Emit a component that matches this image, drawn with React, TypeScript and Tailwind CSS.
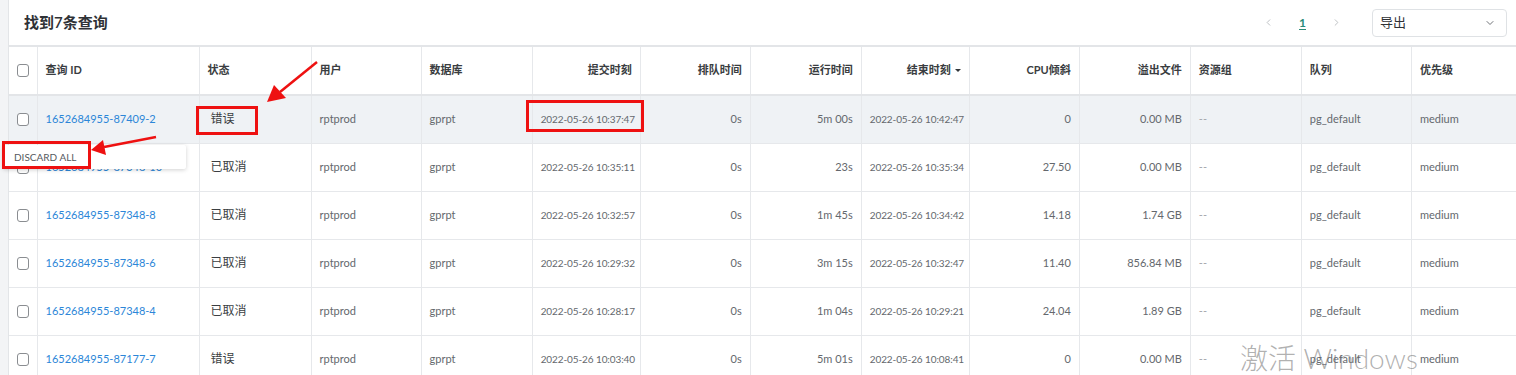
import { ChevronDown, ChevronLeft, ChevronRight } from 'lucide-react';

interface QueryRow {
  id: string;
  status: string;
  user: string;
  db: string;
  submitted: string;
  queued: string;
  runtime: string;
  ended: string;
  cpuSkew: string;
  spill: string;
  group: string;
  queue: string;
  priority: string;
}

const rows: QueryRow[] = [
  { id: '1652684955-87409-2', status: '错误', user: 'rptprod', db: 'gprpt', submitted: '2022-05-26 10:37:47', queued: '0s', runtime: '5m 00s', ended: '2022-05-26 10:42:47', cpuSkew: '0', spill: '0.00 MB', group: '--', queue: 'pg_default', priority: 'medium' },
  { id: '1652684955-87348-10', status: '已取消', user: 'rptprod', db: 'gprpt', submitted: '2022-05-26 10:35:11', queued: '0s', runtime: '23s', ended: '2022-05-26 10:35:34', cpuSkew: '27.50', spill: '0.00 MB', group: '--', queue: 'pg_default', priority: 'medium' },
  { id: '1652684955-87348-8', status: '已取消', user: 'rptprod', db: 'gprpt', submitted: '2022-05-26 10:32:57', queued: '0s', runtime: '1m 45s', ended: '2022-05-26 10:34:42', cpuSkew: '14.18', spill: '1.74 GB', group: '--', queue: 'pg_default', priority: 'medium' },
  { id: '1652684955-87348-6', status: '已取消', user: 'rptprod', db: 'gprpt', submitted: '2022-05-26 10:29:32', queued: '0s', runtime: '3m 15s', ended: '2022-05-26 10:32:47', cpuSkew: '11.40', spill: '856.84 MB', group: '--', queue: 'pg_default', priority: 'medium' },
  { id: '1652684955-87348-4', status: '已取消', user: 'rptprod', db: 'gprpt', submitted: '2022-05-26 10:28:17', queued: '0s', runtime: '1m 04s', ended: '2022-05-26 10:29:21', cpuSkew: '24.04', spill: '1.89 GB', group: '--', queue: 'pg_default', priority: 'medium' },
  { id: '1652684955-87177-7', status: '错误', user: 'rptprod', db: 'gprpt', submitted: '2022-05-26 10:03:40', queued: '0s', runtime: '5m 01s', ended: '2022-05-26 10:08:41', cpuSkew: '0', spill: '0.00 MB', group: '--', queue: 'pg_default', priority: 'medium' },
];

const columns: { label: string; width: string; right?: boolean; sort?: boolean }[] = [
  { label: '查询 ID', width: 'w-[162px]' },
  { label: '状态', width: 'w-[112px]' },
  { label: '用户', width: 'w-[110px]' },
  { label: '数据库', width: 'w-[111px]' },
  { label: '提交时刻', width: 'w-[108px]', right: true },
  { label: '排队时间', width: 'w-[110px]', right: true },
  { label: '运行时间', width: 'w-[111px]', right: true },
  { label: '结束时刻', width: 'w-[108px]', right: true, sort: true },
  { label: 'CPU倾斜', width: 'w-[110px]', right: true },
  { label: '溢出文件', width: 'w-[111px]', right: true },
  { label: '资源组', width: 'w-[111px]' },
  { label: '队列', width: 'w-[110px]' },
  { label: '优先级', width: 'w-[105px]' },
];

function Checkbox() {
  return <div className="mx-auto h-[13px] w-[12px] rounded-[3px] border border-[#8a8d91] bg-white" />;
}

const base = 'border-r border-[#e6e8eb] whitespace-nowrap overflow-hidden';
const cell = `${base} px-2 text-[11px] text-[#64686d]`;
const right = `${cell} text-right`;
const date = `${base} px-2 text-right text-[10px] tracking-[-0.1px] text-[#64686d]`;

export default function App() {
  return (
    <div
      className="relative flex h-[375px] w-[1516px] overflow-hidden bg-[#f3f4f6]"
      style={{ fontFamily: 'Lato, "Noto Sans CJK SC", sans-serif' }}
    >
      <div className="ml-[8px] flex-1 border-l border-[#e3e5e8] bg-white">
        {/* Header */}
        <div className="flex h-[45px] items-center pl-[15px] pr-[10px]">
          <h2 className="text-[15px] font-semibold text-[#2f3236]">找到7条查询</h2>
          <div className="ml-auto flex items-center">
            <ChevronLeft size={11} className="text-[#b9bcc0]" />
            <span className="ml-[25px] text-[12px] font-bold text-[#2b8a78] underline underline-offset-2">1</span>
            <ChevronRight size={11} className="ml-[25px] text-[#b9bcc0]" />
            <div className="ml-[30px] flex h-[28px] w-[135px] items-center justify-between rounded-[4px] border border-[#dfe2e5] pl-[7px] pr-[10px]">
              <span className="text-[13px] text-[#2f3236]">导出</span>
              <ChevronDown size={12} className="text-[#707378]" />
            </div>
          </div>
        </div>

        <table className="w-[1508px] table-fixed border-collapse">
          <colgroup>
            <col className="w-[28px]" />
            {columns.map((c) => (
              <col key={c.label} className={c.width} />
            ))}
          </colgroup>
          <thead>
            <tr className="h-[49px] border-y-2 border-[#e3e5e8]">
              <th className="border-r border-[#e6e8eb]">
                <Checkbox />
              </th>
              {columns.map((c) => (
                <th
                  key={c.label}
                  className={`border-r border-[#e6e8eb] px-2 text-[11px] font-bold text-[#3a3d41] ${c.right ? 'text-right' : 'text-left'}`}
                >
                  {c.label}
                  {c.sort && <span className="relative -top-px ml-1 inline-block border-x-[3px] border-t-[3px] border-x-transparent border-t-[#33363a] align-middle" />}
                </th>
              ))}
            </tr>
          </thead>
          <tbody>
            {rows.map((r, i) => (
              <tr key={r.id} className={`h-[48px] border-b border-[#e6e8eb] ${i === 0 ? 'bg-[#eff2f5]' : 'bg-white'}`}>
                <td className="border-r border-[#e6e8eb]">
                  <Checkbox />
                </td>
                <td className={`${base} px-2 text-[11px] text-[#2c86d8]`}>{r.id}</td>
                <td className={`${base} pl-[11px] pr-2 text-[12px] text-[#3b3e42]`}>{r.status}</td>
                <td className={cell}>{r.user}</td>
                <td className={cell}>{r.db}</td>
                <td className={date}>{r.submitted}</td>
                <td className={right}>{r.queued}</td>
                <td className={right}>{r.runtime}</td>
                <td className={date}>{r.ended}</td>
                <td className={right}>{r.cpuSkew}</td>
                <td className={right}>{r.spill}</td>
                <td className={`${base} px-2 text-[11px] text-[#a3a6aa]`}>{r.group}</td>
                <td className={cell}>{r.queue}</td>
                <td className={`${cell} border-r-0`}>{r.priority}</td>
              </tr>
            ))}
          </tbody>
        </table>
      </div>

      {/* Context menu */}
      <div className="absolute left-[3px] top-[145px] flex h-[24px] w-[183px] items-center rounded-[2px] bg-white pl-[11px] text-[10px] text-[#55595e] shadow-[0_1px_4px_rgba(0,0,0,0.18)]">
        DISCARD ALL
      </div>

      {/* Annotation boxes */}
      <div className="absolute left-[196px] top-[106px] h-[29px] w-[62px] border-[3px] border-[#ee1111]" />
      <div className="absolute left-[526px] top-[100px] h-[32px] w-[118px] border-[3px] border-[#ee1111]" />
      <div className="absolute left-[2px] top-[141px] h-[28px] w-[89px] border-[3px] border-[#ee1111]" />

      {/* Arrows */}
      <svg className="pointer-events-none absolute left-0 top-0" width="1516" height="375">
        <g stroke="#ee1111" strokeWidth="2.5" fill="#ee1111">
          <line x1="317" y1="62" x2="280" y2="92" />
          <polygon points="267,102 274,85 286,98" stroke="none" />
          <line x1="156" y1="137" x2="104" y2="147" />
          <polygon points="91,150 103,140 106,155" stroke="none" />
        </g>
      </svg>

      {/* Watermark */}
      <div className="pointer-events-none absolute left-[1240px] top-[337px] text-[28px] font-light text-[rgba(110,110,110,0.55)]">
        激活 Windows
      </div>
    </div>
  );
}
